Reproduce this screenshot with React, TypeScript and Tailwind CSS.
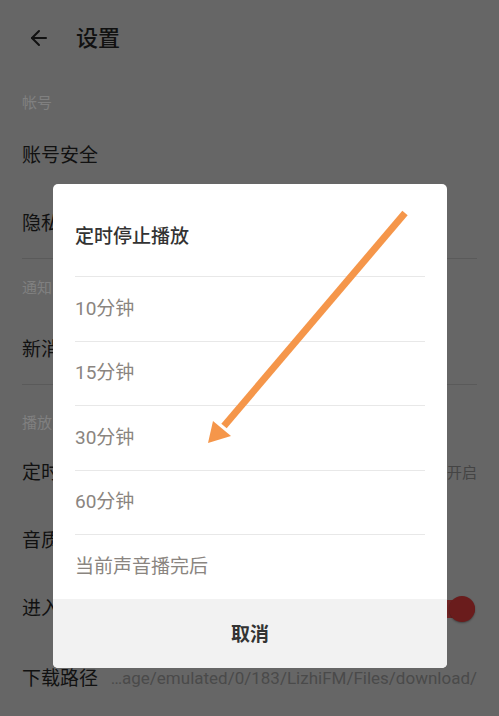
import { ArrowLeft } from "lucide-react";

const font = { fontFamily: 'Roboto, "Noto Sans CJK SC", sans-serif' };

function Label({ text, className }: { text: string; className: string }) {
  return <div className={`px-[22px] text-[15px] leading-[20px] text-[#808080] ${className}`}>{text}</div>;
}

function Row({ title, children }: { title: string; children?: React.ReactNode }) {
  return (
    <div className="flex h-[68px] items-center justify-between px-[22px]">
      <span className="text-[19px] text-[#111]">{title}</span>
      {children}
    </div>
  );
}

const options = ["10分钟", "15分钟", "30分钟", "60分钟", "当前声音播完后"];

export default function App() {
  return (
    <div className="relative h-[716px] w-[499px] overflow-hidden bg-[#666666]" style={font}>
      <header className="flex h-[76px] items-center">
        <ArrowLeft className="ml-[27px] h-6 w-6 text-[#111]" strokeWidth={2} />
        <h1 className="ml-[25px] text-[22px] font-medium text-[#111]">设置</h1>
      </header>

      <Label text="帐号" className="h-[46px] pt-[17px]" />
      <Row title="账号安全" />
      <Row title="隐私设置" />
      <div className="mx-[22px] h-px bg-[#5a5a5a]" />

      <Label text="通知" className="h-[57px] pt-[19px]" />
      <Row title="新消息通知" />
      <div className="mx-[22px] h-px bg-[#5a5a5a]" />

      <Label text="播放" className="h-[54px] pt-[28px]" />
      <Row title="定时停止播放">
        <span className="text-[15px] text-[#444]">已开启</span>
      </Row>
      <Row title="音质选择" />
      <Row title="进入播放页">
        <div className="relative mr-[2px] flex h-[26px] w-[44px] items-center">
          <div className="h-[18px] w-full rounded-full bg-[#6f2424]" />
          <div className="absolute right-0 h-[26px] w-[26px] rounded-full bg-[#6a1c1c] shadow-[0_1px_2px_rgba(0,0,0,0.35)]" />
        </div>
      </Row>
      <div className="flex h-[72px] items-center px-[22px]">
        <span className="shrink-0 text-[19px] text-[#111]">下载路径</span>
        <span className="ml-auto truncate text-[17px] text-[#4a4a4a]">…age/emulated/0/183/LizhiFM/Files/download/</span>
      </div>

      <div className="absolute left-[53px] top-[184px] flex w-[394px] flex-col overflow-hidden rounded-[5px] bg-white">
        <div className="flex h-[92px] items-center px-[22px] pt-[14px]">
          <span className="text-[19px] font-medium text-[#333]">定时停止播放</span>
        </div>
        {options.map((o) => (
          <div key={o} className="mx-[22px] flex h-[64.6px] items-center border-t border-[#e8e8e8]">
            <span className="text-[19px] text-[#8a8580]">{o}</span>
          </div>
        ))}
        <div className="flex h-[69px] items-center justify-center bg-[#f2f2f2] pt-[3px]">
          <span className="text-[19px] font-bold text-[#333]">取消</span>
        </div>
      </div>

      <svg className="pointer-events-none absolute inset-0" width="499" height="716" viewBox="0 0 499 716">
        <line x1="405" y1="213" x2="224" y2="426" stroke="#f5964a" strokeWidth="7" />
        <polygon points="208,443 213,421 231,436" fill="#f5964a" />
      </svg>
    </div>
  );
}
